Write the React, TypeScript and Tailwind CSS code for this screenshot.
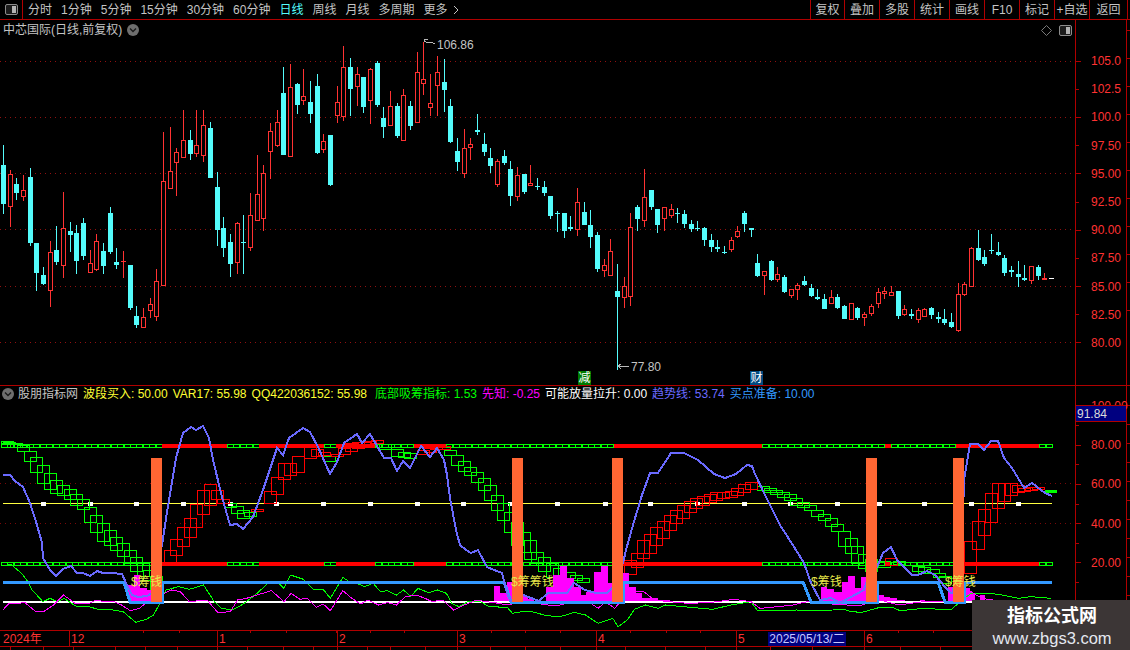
const RED = '#ff3232';
const CYAN = '#54fcfc';

// [x, wickTop, bodyTop, bodyBottom, wickBottom, isRed] read at 3x from the origin of each chunk
type C = [number, number, number, number, number, number];
const chunks: { ox: number; oy: number; rows: C[] }[] = [
  {
    ox: 0,
    oy: 120,
    rows: [
      [10, 75, 135, 252, 282, 0], [31, 150, 162, 260, 320, 1], [49, 175, 192, 219, 240, 0], [70, 165, 211, 230, 243, 1],
      [91, 144, 171, 369, 378, 0], [109, 369, 369, 459, 513, 0], [130, 441, 465, 492, 495, 0], [151, 363, 397, 513, 561, 1],
      [169, 318, 390, 426, 435, 0], [190, 216, 325, 437, 474, 1], [211, 306, 333, 345, 396, 0], [229, 315, 339, 423, 462, 0],
      [250, 294, 309, 408, 420, 0], [271, 390, 430, 458, 459, 1], [289, 342, 364, 449, 453, 1], [310, 369, 393, 438, 462, 0],
      [331, 261, 279, 396, 402, 0], [349, 384, 426, 435, 447, 0], [370, 393, 424, 426, 474, 1], [391, 435, 435, 564, 570, 0],
      [409, 558, 588, 615, 624, 0], [430, 564, 592, 623, 624, 1], [451, 534, 553, 572, 594, 1], [469, 447, 484, 590, 603, 1],
      [490, 36, 184, 498, 498, 1], [511, 21, 154, 207, 207, 1], [529, 84, 97, 128, 228, 1], [550, -30, 61, 113, 114, 1],
      [571, 30, 60, 102, 120, 0], [589, -30, 76, 101, 111, 1], [610, -30, 15, 107, 126, 1], [631, 6, 24, 174, 174, 0],
      [652, 156, 201, 330, 378, 0], [670, 291, 324, 384, 411, 0], [691, 342, 366, 432, 471, 0], [712, 306, 310, 429, 462, 1],
      [730, 285, 366, 369, 462, 0], [751, 219, 286, 383, 393, 1], [772, 105, 223, 302, 303, 1], [790, 135, 160, 296, 333, 1],
      [811, 9, 34, 95, 177, 1], [832, -30, 6, 77, 80, 1],
    ],
  },
  {
    ox: 280,
    oy: 30,
    rows: [
      [10, 111, 189, 375, 375, 0], [31, 102, 172, 380, 381, 1], [52, 159, 162, 225, 252, 0], [70, 117, 199, 212, 225, 1],
      [91, 153, 216, 252, 279, 0], [112, 132, 168, 369, 372, 0], [130, 312, 334, 359, 369, 1], [151, 315, 315, 465, 468, 0],
      [172, 168, 217, 257, 279, 1], [190, 48, 112, 260, 273, 1], [211, 84, 111, 177, 258, 0], [232, 111, 133, 170, 228, 1],
      [250, 141, 141, 231, 249, 0], [271, 114, 118, 212, 282, 1], [292, 93, 99, 225, 231, 0], [310, 231, 264, 291, 324, 0],
      [331, 183, 229, 287, 288, 1], [352, 219, 228, 318, 324, 0], [370, 177, 196, 332, 333, 1], [391, 213, 228, 288, 300, 0],
      [412, 66, 127, 278, 279, 1], [430, 36, 148, 161, 195, 1], [451, 132, 220, 233, 258, 1], [472, 78, 127, 167, 258, 1],
      [493, 87, 156, 180, 246, 0], [511, 207, 228, 336, 339, 0], [532, 324, 363, 396, 423, 0], [553, 297, 355, 431, 444, 1],
      [571, 324, 343, 353, 390, 1], [592, 252, 300, 305, 315, 0], [613, 309, 342, 366, 378, 0], [631, 354, 384, 408, 429, 0],
      [652, 387, 394, 464, 471, 1], [673, 360, 378, 399, 405, 0], [691, 393, 417, 498, 528, 0], [712, 411, 436, 500, 513, 1],
      [733, 432, 432, 486, 492, 0], [751, 405, 460, 467, 468, 1], [772, 444, 467, 470, 480, 0], [793, 453, 471, 489, 498, 0],
      [811, 498, 498, 558, 567, 0], [832, 543, 549, 552, 606, 0],
    ],
  },
  {
    ox: 560,
    oy: 160,
    rows: [
      [13, 159, 159, 213, 234, 0], [31, 168, 201, 207, 213, 0], [52, 84, 127, 209, 228, 1], [73, 126, 156, 195, 195, 0],
      [91, 150, 195, 231, 264, 0], [112, 216, 225, 327, 336, 0], [133, 297, 316, 332, 351, 1], [151, 237, 274, 347, 348, 1],
      [172, 312, 393, 411, 630, 0], [193, 351, 379, 414, 444, 1], [211, 159, 202, 410, 438, 1], [232, 135, 141, 177, 213, 0],
      [253, 27, 112, 182, 201, 1], [274, 90, 90, 141, 150, 0], [292, 147, 147, 195, 219, 0], [313, 142, 142, 177, 213, 1],
      [334, 132, 148, 167, 174, 1], [352, 144, 159, 162, 189, 0], [373, 150, 162, 192, 204, 0], [394, 180, 192, 207, 216, 0],
      [412, 183, 205, 208, 213, 0], [433, 201, 204, 240, 258, 0], [454, 222, 240, 261, 276, 0], [472, 240, 261, 267, 276, 0],
      [493, 258, 276, 279, 282, 0], [514, 231, 241, 270, 276, 1], [532, 198, 214, 231, 234, 1], [553, 153, 159, 192, 216, 0],
      [574, 204, 204, 210, 231, 0], [592, 282, 309, 348, 351, 0], [613, 334, 334, 347, 405, 1], [634, 300, 303, 360, 363, 0],
      [652, 321, 343, 360, 366, 1], [673, 345, 351, 396, 399, 0], [694, 388, 388, 407, 414, 1], [712, 369, 376, 389, 420, 1],
      [733, 348, 363, 375, 378, 0], [754, 372, 384, 408, 411, 0], [772, 387, 411, 417, 420, 0], [793, 402, 417, 447, 447, 0],
      [814, 390, 412, 431, 432, 1], [832, 402, 411, 444, 447, 0],
    ],
  },
  {
    ox: 820,
    oy: 210,
    rows: [
      [73, 285, 288, 327, 327, 0], [94, 280, 280, 329, 330, 1], [112, 291, 294, 324, 330, 0], [133, 306, 313, 323, 348, 1],
      [154, 282, 289, 311, 318, 1], [175, 234, 247, 281, 294, 1], [193, 231, 244, 251, 267, 1], [214, 228, 247, 257, 258, 1],
      [235, 243, 243, 318, 327, 0], [253, 285, 298, 315, 318, 1], [274, 297, 312, 317, 327, 0], [295, 294, 301, 329, 339, 1],
      [313, 294, 298, 320, 321, 1], [334, 291, 294, 315, 327, 0], [355, 306, 321, 327, 339, 0], [373, 297, 327, 339, 345, 0],
      [394, 309, 336, 351, 354, 0], [415, 219, 253, 362, 366, 1], [433, 216, 223, 254, 258, 1], [454, 111, 115, 230, 231, 1],
      [475, 60, 114, 150, 153, 0], [493, 120, 141, 162, 168, 0], [514, 72, 120, 123, 132, 0], [535, 96, 126, 135, 138, 0],
      [553, 135, 144, 189, 198, 0], [574, 168, 180, 186, 201, 0], [595, 153, 192, 201, 231, 0], [613, 165, 204, 210, 213, 0],
      [634, 169, 169, 212, 222, 1], [655, 165, 171, 198, 210, 0], [673, 189, 205, 209, 210, 1],
    ],
  },
];

const candles = chunks.flatMap((c) =>
  c.rows.map(([x, wt, bt, bb, wb, up]) => ({
    x: Math.floor(c.ox + x / 3),
    wt: Math.round(c.oy + wt / 3),
    bt: Math.round(c.oy + bt / 3),
    bb: Math.round(c.oy + bb / 3),
    wb: Math.round(c.oy + wb / 3),
    up: up === 1,
  }))
);

// stair boxes of the indicator: [x, top, bottom]
const greenBoxes = [
  [1, 441, 443], [3, 442, 444], [10, 443, 447], [17, 445, 451], [24, 451, 461], [30, 457, 472], [37, 465, 483], [44, 473, 489],
  [50, 480, 493], [57, 485, 495], [64, 489, 499], [70, 494, 505], [77, 499, 509], [84, 507, 522], [90, 515, 532], [97, 523, 541],
  [104, 530, 545], [110, 537, 550], [117, 543, 556], [124, 550, 563], [130, 557, 571], [137, 563, 576], [143, 570, 580], [150, 576, 590],
  [224, 503, 507], [231, 506, 513], [237, 510, 518], [244, 512, 516], [323, 456, 461],
  [379, 444, 449], [391, 449, 456], [398, 452, 457], [404, 453, 458], [444, 450, 455], [451, 455, 465], [458, 461, 471], [464, 467, 475],
  [471, 472, 482], [478, 478, 490], [484, 485, 500], [491, 495, 510], [497, 503, 520], [504, 512, 532], [511, 522, 545], [518, 532, 552],
  [524, 540, 559], [531, 552, 563], [538, 557, 571], [546, 563, 577], [553, 568, 578], [563, 572, 578], [570, 575, 580], [577, 578, 582],
  [757, 486, 490], [764, 488, 492], [770, 490, 494], [777, 492, 497], [784, 494, 500], [790, 498, 505], [797, 502, 507], [804, 505, 510],
  [811, 510, 516], [818, 514, 520], [825, 518, 526], [831, 524, 531], [838, 531, 546], [845, 538, 553], [851, 546, 563], [858, 554, 568],
  [865, 559, 571], [878, 561, 567], [893, 561, 564], [912, 566, 571], [918, 567, 573], [927, 569, 573], [933, 573, 577], [939, 576, 583],
];
const redBoxes = [
  [164, 550, 563], [170, 539, 555], [177, 527, 546], [184, 518, 537], [190, 504, 527], [197, 490, 514], [204, 484, 505], [211, 490, 499],
  [217, 499, 503], [251, 509, 511], [264, 491, 503], [271, 477, 494], [278, 463, 479], [284, 463, 475], [292, 456, 472], [304, 447, 458],
  [311, 449, 456], [318, 452, 455], [331, 454, 456], [338, 448, 454], [345, 443, 451], [352, 442, 448], [358, 442, 444], [364, 441, 444],
  [371, 440, 443], [417, 450, 454], [424, 448, 452], [430, 446, 449], [438, 446, 449],
  [624, 560, 574], [631, 553, 567], [637, 540, 558], [644, 534, 553], [650, 527, 545], [657, 521, 538], [664, 515, 530], [670, 510, 523],
  [677, 505, 518], [684, 501, 512], [690, 498, 508], [697, 496, 505], [704, 494, 502], [710, 492, 500], [717, 492, 498], [725, 491, 497],
  [731, 488, 495], [738, 484, 492], [745, 482, 489], [885, 558, 565],
  [964, 565, 573], [964, 541, 562], [972, 521, 549], [978, 509, 535], [985, 493, 522], [992, 483, 508], [998, 483, 501], [1005, 483, 495],
  [1012, 485, 492], [1018, 488, 491], [1025, 487, 490], [1032, 487, 489],
];

const redSpans = [[162, 225], [256, 325], [336, 378], [416, 445], [616, 759], [884, 893], [957, 1039]];
const slots = Array.from({ length: 163 }, (_, i) => 1 + i * 6.45);
const isRedSlot = (x: number) => redSpans.some(([a, b]) => x >= a - 3 && x < b - 3);

const magentaBars = [
  [128, 134, 585], [134, 140, 575], [140, 147, 588], [147, 151, 590],
  [494, 500, 586], [500, 507, 593], [507, 512, 582], [523, 528, 596], [528, 534, 599], [546, 553, 587], [553, 560, 575], [560, 567, 566],
  [567, 574, 578], [574, 581, 587], [581, 586, 595], [586, 594, 592], [594, 601, 572], [601, 608, 566], [608, 612, 583], [623, 629, 573],
  [629, 636, 587], [636, 642, 593], [642, 650, 598], [650, 658, 598], [658, 664, 600], [664, 670, 600],
  [821, 827, 587], [827, 834, 589], [834, 842, 592], [842, 848, 582], [848, 855, 576], [855, 861, 588], [861, 866, 577], [877, 884, 595],
  [884, 890, 597], [890, 897, 598], [897, 905, 600], [920, 925, 600], [948, 953, 587], [964, 970, 588], [970, 975, 593], [980, 985, 595], [988, 993, 599],
];

const trendLine = [
  [3, 475], [10, 475], [15, 481], [23, 487], [30, 503], [37, 525], [42, 543], [43, 558], [50, 570], [56, 576], [63, 569], [71, 566], [77, 573], [83, 573],
  [90, 576], [97, 571], [103, 573], [112, 573], [122, 574], [126, 583], [132, 595], [138, 597], [147, 596], [152, 593], [162, 545], [167, 512], [176, 458],
  [183, 433], [191, 427], [196, 430], [203, 426], [209, 438], [213, 460], [222, 497], [230, 525], [237, 524], [243, 529], [253, 517], [263, 490], [277, 448],
  [283, 455], [289, 438], [303, 428], [310, 432], [318, 447], [330, 474], [337, 462], [344, 443], [357, 434], [362, 443], [370, 434], [384, 458], [391, 458],
  [397, 471], [403, 461], [410, 468], [421, 446], [430, 457], [437, 448], [444, 460], [447, 475], [450, 498], [456, 530], [460, 545], [466, 550], [471, 553],
  [478, 550], [487, 567], [494, 570], [502, 573], [507, 593], [511, 601], [523, 595], [539, 601], [548, 593], [560, 593], [567, 593], [574, 583], [585, 590],
  [596, 593], [607, 593], [612, 588], [623, 563], [626, 550], [633, 525], [642, 495], [650, 473], [658, 473], [671, 453], [684, 453], [698, 460], [714, 474],
  [725, 478], [736, 474], [747, 465], [752, 466], [755, 474], [765, 495], [780, 525], [796, 550], [804, 563], [811, 583], [820, 600], [831, 598], [840, 603],
  [851, 597], [864, 590], [866, 583], [877, 567], [883, 553], [891, 547], [897, 560], [912, 575], [918, 575], [927, 571], [935, 575], [945, 587], [951, 593],
  [953, 593], [964, 493], [964, 480], [970, 444], [978, 444], [984, 450], [991, 441], [998, 441], [1004, 458], [1012, 468], [1024, 488], [1032, 483], [1045, 493], [1052, 496],
];
const buyLine = [[3, 582], [124, 582], [130, 602], [162, 602], [162, 582], [504, 582], [511, 602], [623, 602], [623, 582], [803, 582], [811, 602], [877, 602], [877, 582], [938, 582], [945, 602], [964, 602], [964, 582], [1052, 582]];

const left = (rows: number[][]) => rows.map(([x, y]) => [x / 2.8, 550 + y / 3]);
const right = (rows: number[][]) => rows.map(([x, y]) => [560 + x / 2.75, 550 + y / 3]);

const greenThin = [
  ...left([
    [8, 48], [30, 42], [60, 70], [75, 90], [90, 120], [120, 155], [140, 145], [160, 155], [180, 145], [200, 160], [215, 170], [250, 170], [280, 180], [305, 178],
    [345, 185], [380, 217], [410, 208], [430, 195], [445, 165], [465, 120], [500, 110], [530, 118], [570, 105], [600, 155], [620, 175], [650, 180], [680, 163],
    [720, 130], [750, 100], [780, 100], [795, 115], [813, 75], [850, 88], [880, 120], [905, 118], [925, 145], [960, 82], [985, 100], [1000, 100], [1020, 110],
    [1045, 100], [1065, 125], [1085, 122], [1110, 135], [1130, 120], [1150, 140], [1170, 115], [1200, 128], [1225, 120], [1250, 130], [1265, 160], [1285, 170],
    [1310, 155], [1345, 155], [1370, 170], [1420, 172], [1435, 190], [1460, 185], [1490, 185], [1530, 197],
  ]),
  ...right([
    [0, 200], [40, 187], [70, 195], [105, 220], [145, 205], [160, 230], [185, 210], [205, 178], [235, 165], [270, 175], [290, 165], [340, 170], [420, 178], [470, 165],
    [525, 155], [542, 180], [570, 180], [600, 182], [650, 180], [700, 183], [750, 180], [780, 178], [800, 185], [830, 187], [880, 172], [915, 172], [935, 182],
    [1000, 175], [1075, 180], [1100, 155], [1130, 130], [1185, 130], [1215, 135], [1260, 145], [1295, 140], [1350, 145],
  ]),
];
const magentaThin = [
  ...left([
    [8, 180], [25, 160], [50, 160], [70, 158], [100, 185], [125, 183], [150, 165], [178, 135], [210, 160], [250, 160], [270, 150], [290, 155], [320, 155], [340, 165],
    [365, 182], [390, 175], [420, 150], [480, 120], [505, 125], [530, 155], [580, 150], [610, 188], [645, 185], [665, 150], [690, 145], [720, 135], [760, 122], [795, 155],
    [815, 130], [840, 148], [860, 145], [885, 172], [905, 162], [925, 182], [960, 122], [985, 145], [1010, 162], [1030, 150], [1060, 165], [1085, 158], [1110, 165],
    [1135, 140], [1165, 135], [1190, 145], [1210, 155], [1240, 150], [1270, 180], [1300, 165], [1335, 150], [1360, 155], [1385, 158], [1420, 165], [1450, 158], [1500, 160], [1535, 165],
  ]),
  ...right([
    [0, 165], [40, 155], [85, 160], [105, 175], [125, 155], [150, 175], [175, 145], [200, 125], [230, 125], [260, 150], [300, 155], [350, 160], [410, 158], [480, 148],
    [525, 155], [550, 175], [600, 170], [640, 165], [680, 155], [720, 160], [790, 165], [830, 165], [880, 150], [930, 165], [1000, 155], [1075, 155], [1110, 140], [1130, 125], [1160, 145], [1190, 150],
  ]),
];
const pts = (rows: number[][]) => rows.map(([x, y]) => `${x},${y}`).join(' ');

const whiteDots = [43, 90, 136, 183, 230, 276, 323, 370, 417, 463, 510, 557, 605, 650, 697, 744, 790, 837, 879, 924, 971, 1018];
const orangeBars = [151, 512, 612, 866, 953];
const dotXs = Array.from({ length: 215 }, (_, i) => i * 5);
const dateTicks = [69, 143, 179, 217, 250, 286, 336, 370, 404, 457, 491, 525, 560, 596, 630, 666, 700, 736, 864, 898, 933];
const floorTicks = [10, 43, 73, 115, 145, 177, 217, 247, 283, 313, 337, 367, 390, 425, 457, 490, 525, 560, 596, 625, 665, 705, 736, 770, 812, 864, 900, 940];

const tabs = ['分时', '1分钟', '5分钟', '15分钟', '30分钟', '60分钟', '日线', '周线', '月线', '多周期'];
const rightCells = ['复权', '叠加', '多股', '统计', '画线', 'F10', '标记', '+自选'];
const priceRows = ['105.0', '102.5', '100.0', '97.50', '95.00', '92.50', '90.00', '87.50', '85.00', '82.50', '80.00'];
const indicatorRows = ['100.00', '', '80.00', '', '60.00', '', '40.00', '', '20.00', '', ''];
const months = [
  { w: 'w-[69px]', t: '2024年' },
  { w: 'w-[148px]', t: '12' },
  { w: 'w-[120px]', t: '1' },
  { w: 'w-[120px]', t: '2' },
  { w: 'w-[139px]', t: '3' },
  { w: 'w-[140px]', t: '4' },
  { w: 'w-[128px]', t: '5' },
  { w: 'w-[100px]', t: '6' },
];
const readouts = [
  { t: '波段买入: 50.00', c: 'text-[#ffff33]' },
  { t: 'VAR17: 55.98', c: 'text-[#ffff33]' },
  { t: 'QQ422036152: 55.98', c: 'text-[#ffff33]' },
  { t: '底部吸筹指标: 1.53', c: 'text-[#00ff00] ml-[3px]' },
  { t: '先知: -0.25', c: 'text-[#ff00ff]' },
  { t: '可能放量拉升: 0.00', c: 'text-white' },
  { t: '趋势线: 53.74', c: 'text-[#6a6aff]' },
  { t: '买点准备: 10.00', c: 'text-[#3399ff]' },
];

function Toggle() {
  return (
    <svg width="13" height="11" viewBox="0 0 13 11">
      <rect x="0.5" y="0.5" width="12" height="10" rx="1.5" fill="#1c1c1c" stroke="#8c8c8c" />
      <rect x="7" y="2" width="4" height="7" fill="#b4b4b4" />
    </svg>
  );
}

function Chevron() {
  return (
    <span className="w-[12px] h-[12px] rounded-full bg-[#6e6e6e] flex items-center justify-center">
      <svg width="8" height="6" viewBox="0 0 8 6">
        <path d="M1 1.5 L4 4.5 L7 1.5" fill="none" stroke="#1a1a1a" strokeWidth="1.4" />
      </svg>
    </span>
  );
}

function DottedLine({ y, color }: { y: number; color: string }) {
  return (
    <g fill={color}>
      {dotXs.map((x) => (
        <rect key={x} x={x} y={y} width="1" height="1" />
      ))}
    </g>
  );
}

function PriceChart() {
  return (
    <svg className="absolute inset-0" width="1075" height="365" viewBox="0 20 1075 365" shapeRendering="crispEdges">
      {[61, 117, 173, 229, 286, 342].map((y) => (
        <DottedLine key={y} y={y} color="#901010" />
      ))}
      {candles.map((k, i) => {
        const col = k.up ? RED : CYAN;
        return (
          <g key={i}>
            <rect x={k.x} y={k.wt} width="1" height={Math.max(k.wb - k.wt, 1)} fill={col} />
            {k.up && k.bb - k.bt > 1 ? (
              <rect x={k.x - 1.5} y={k.bt + 0.5} width="4" height={k.bb - k.bt - 1} fill="#000" stroke={col} />
            ) : (
              <rect x={k.x - 2} y={k.bt} width="5" height={Math.max(k.bb - k.bt, 1)} fill={col} />
            )}
          </g>
        );
      })}
      <rect x="1049" y="278" width="5" height="1" fill="#fff" />
      <path d="M424 41 L424 39 L428 39 M424 41 L428 43 L431 42 L435 44" fill="none" stroke="#b8b8b8" />
      <path d="M618 366 L629 366 M618 366 L621 364 M618 366 L621 369" fill="none" stroke="#b8b8b8" />
    </svg>
  );
}

function IndicatorChart() {
  return (
    <svg className="absolute inset-0" width="1075" height="244" viewBox="0 386 1075 244" shapeRendering="crispEdges">
      {[483, 523].map((y) => (
        <DottedLine key={y} y={y} color="#7a0808" />
      ))}
      <line x1="3" x2="1052" y1="503.5" y2="503.5" stroke="#ffff40" />
      {whiteDots.map((x) => (
        <rect key={x} x={x - 2} y="502" width="5" height="4" fill="#fff" />
      ))}
      {[444, 562].map((y) =>
        slots.map((x) =>
          isRedSlot(x) ? (
            <rect key={`${y}-${x}`} x={x} y={y} width="6.5" height="4" fill="#ff0000" />
          ) : (
            <rect key={`${y}-${x}`} x={x + 0.5} y={y + 0.5} width="6" height="2.5" fill="none" stroke="#00ff00" />
          )
        )
      )}
      {greenBoxes.map(([x, a, b], i) => (
        <rect key={i} x={x + 0.5} y={a + 0.5} width="12" height={b - a} fill="none" stroke="#00ff00" />
      ))}
      {redBoxes.map(([x, a, b], i) => (
        <rect key={i} x={x + 0.5} y={a + 0.5} width="12" height={b - a} fill="none" stroke="#ff0000" />
      ))}
      <rect x="1045" y="490" width="12" height="3" fill="#00ff00" />
      <line x1="3" x2="1052" y1="601.5" y2="601.5" stroke="#fff" strokeWidth="2" />
      {magentaBars.map(([a, b, t], i) => (
        <rect key={i} x={a} y={t} width={b - a} height={601 - t} fill="#ff00ff" />
      ))}
      <polyline points={pts(greenThin)} fill="none" stroke="#00ff00" />
      <polyline points={pts(magentaThin)} fill="none" stroke="#ff00ff" />
      <polyline points={pts(buyLine)} fill="none" stroke="#3399ff" strokeWidth="3" />
      <polyline points={pts(trendLine)} fill="none" stroke="#6a6aff" strokeWidth="2" />
      {orangeBars.map((x) => (
        <rect key={x} x={x} y="458" width="11" height="144" fill="#ff6633" />
      ))}
    </svg>
  );
}

function TickMarks({ xs, y, h }: { xs: number[]; y: number; h: number }) {
  return (
    <svg className="absolute left-0" style={{ top: y }} width="972" height={h} shapeRendering="crispEdges">
      {xs.map((x) => (
        <rect key={x} x={x} y="0" width="1" height={h} fill="#b00000" />
      ))}
    </svg>
  );
}

export default function App() {
  return (
    <div className="relative w-[1130px] h-[650px] overflow-hidden bg-black flex flex-col text-[12px] leading-none text-[#c4c4c4] font-['Liberation_Sans','Noto_Sans_CJK_SC',sans-serif]">
      {/* top toolbar */}
      <div className="h-[20px] shrink-0 flex border-b border-[#b00000]">
        <div className="w-[23px] flex items-center justify-center border-r border-[#b00000]">
          <Toggle />
        </div>
        <div className="flex items-center gap-[9px] pl-[5px]">
          {tabs.map((t) => (
            <span key={t} className={t === '日线' ? 'text-[#54fcfc]' : ''}>
              {t}
            </span>
          ))}
          <span className="flex items-center gap-[5px]">
            更多
            <svg width="6" height="10" viewBox="0 0 6 10">
              <path d="M1 1 L5 5 L1 9" fill="none" stroke="#c4c4c4" />
            </svg>
          </span>
        </div>
        <div className="ml-auto flex">
          {rightCells.map((t, i) => (
            <span key={t} className={`${i === 0 ? 'w-[34px]' : 'w-[35px]'} flex items-center justify-center border-l border-[#b00000]`}>
              {t}
            </span>
          ))}
          <span className="w-[38px] flex items-center justify-center border-l border-[#b00000]">返回</span>
          <span className="w-[3px] border-l border-[#b00000]" />
        </div>
      </div>

      {/* price panel */}
      <div className="h-[366px] shrink-0 flex border-b border-[#b00000]">
        <div className="relative w-[1075px]">
          <PriceChart />
          <div className="relative h-[20px] flex items-center gap-[5px] pl-[3px]">
            <span>中芯国际(日线,前复权)</span>
            <Chevron />
            <svg className="ml-auto" width="11" height="11" viewBox="0 0 11 11">
              <path d="M5.5 0.5 L10.5 5.5 L5.5 10.5 L0.5 5.5 Z" fill="none" stroke="#7a7a7a" />
            </svg>
            <span className="ml-[2px] mr-[3px] flex">
              <Toggle />
            </span>
          </div>
          <span className="absolute left-[437px] top-[19px]">106.86</span>
          <span className="absolute left-[631px] top-[341px]">77.80</span>
          <span className="absolute left-[578px] top-[351px] w-[13px] h-[14px] bg-[#007a00] text-white flex items-center justify-center">减</span>
          <span className="absolute left-[750px] top-[351px] w-[13px] h-[14px] bg-[#004a80] text-white flex items-center justify-center">财</span>
        </div>
        <div className="w-[51px] pt-[27px] border-l border-[#b00000] text-[#ff3232]">
          {priceRows.map((t, i) => (
            <div key={t} className="h-[28.2px] grid grid-cols-[15px_1fr] items-center">
              <span className={`${i % 2 === 0 ? 'w-[5px]' : 'w-[3px]'} h-px bg-[#b00000]`} />
              <span>{t}</span>
            </div>
          ))}
        </div>
        <div className="w-[4px] flex flex-col gap-[27px] pt-[10px] border-l border-[#b00000]">
          {priceRows.map((t) => (
            <span key={t} className="w-[3px] h-px bg-[#b00000]" />
          ))}
        </div>
      </div>

      {/* indicator panel */}
      <div className="h-[245px] shrink-0 flex border-b border-[#b00000]">
        <div className="relative w-[1075px]">
          <IndicatorChart />
          <div className="relative h-[16px] flex items-center gap-[5px] pl-[2px]">
            <Chevron />
            <span className="ml-[-1px]">股朋指标网</span>
            {readouts.map((r) => (
              <span key={r.t} className={`whitespace-nowrap ${r.c}`}>
                {r.t}
              </span>
            ))}
          </div>
          <span className="absolute left-[131px] top-[190px] text-[#e8e84a]">$筹钱</span>
          <span className="absolute left-[511px] top-[190px] text-[#e8e84a]">$筹筹钱</span>
          <span className="absolute left-[811px] top-[190px] text-[#e8e84a]">$筹钱</span>
          <span className="absolute left-[945px] top-[190px] text-[#e8e84a]">$筹钱</span>
        </div>
        <div className="relative w-[51px] pt-[10px] border-l border-[#b00000] text-[#ff3232]">
          {indicatorRows.map((t, i) => (
            <div key={i} className="h-[19.65px] grid grid-cols-[15px_1fr] items-center">
              <span className={`${t ? 'w-[5px]' : 'w-[3px]'} h-px bg-[#b00000]`} />
              <span>{t}</span>
            </div>
          ))}
          <div className="absolute left-0 right-0 top-[19px] h-[17px] bg-[#000080] border-y border-[#b00000] text-[#dcdcdc] flex items-center pl-[1px]">91.84</div>
        </div>
        <div className="w-[4px] flex flex-col gap-[18px] pt-[19px] border-l border-[#b00000]">
          {indicatorRows.map((t, i) => (
            <span key={i} className="w-[3px] h-px bg-[#b00000]" />
          ))}
        </div>
      </div>

      {/* date axis */}
      <div className="relative h-[16px] shrink-0 flex border-b border-[#b00000] text-[#ff3232]">
        <TickMarks xs={dateTicks} y={0} h={2} />
        {months.map((m, i) => (
          <span key={m.t} className={`${m.w} flex items-center ${i === 0 ? 'pl-[3px]' : 'border-l border-[#b00000] pl-[1px]'}`}>
            {m.t}
          </span>
        ))}
        <span className="absolute left-[768px] top-[1px] w-[78px] h-[14px] bg-[#000080] text-[#c8c8ff] flex items-center justify-center">2025/05/13/二</span>
      </div>
      <div className="relative h-[3px] shrink-0">
        <TickMarks xs={floorTicks} y={0} h={3} />
      </div>

      {/* watermark */}
      <div className="absolute right-0 bottom-0 w-[158px] h-[50px] bg-[#3c3636] flex flex-col items-center pt-[7px] pl-[2px]">
        <span className="text-[18px] font-bold text-white leading-[18px]">指标公式网</span>
        <span className="mt-[3px] text-[16.5px] leading-[20px] text-[#e4e8f0]">www.zbgs3.com</span>
      </div>
    </div>
  );
}
